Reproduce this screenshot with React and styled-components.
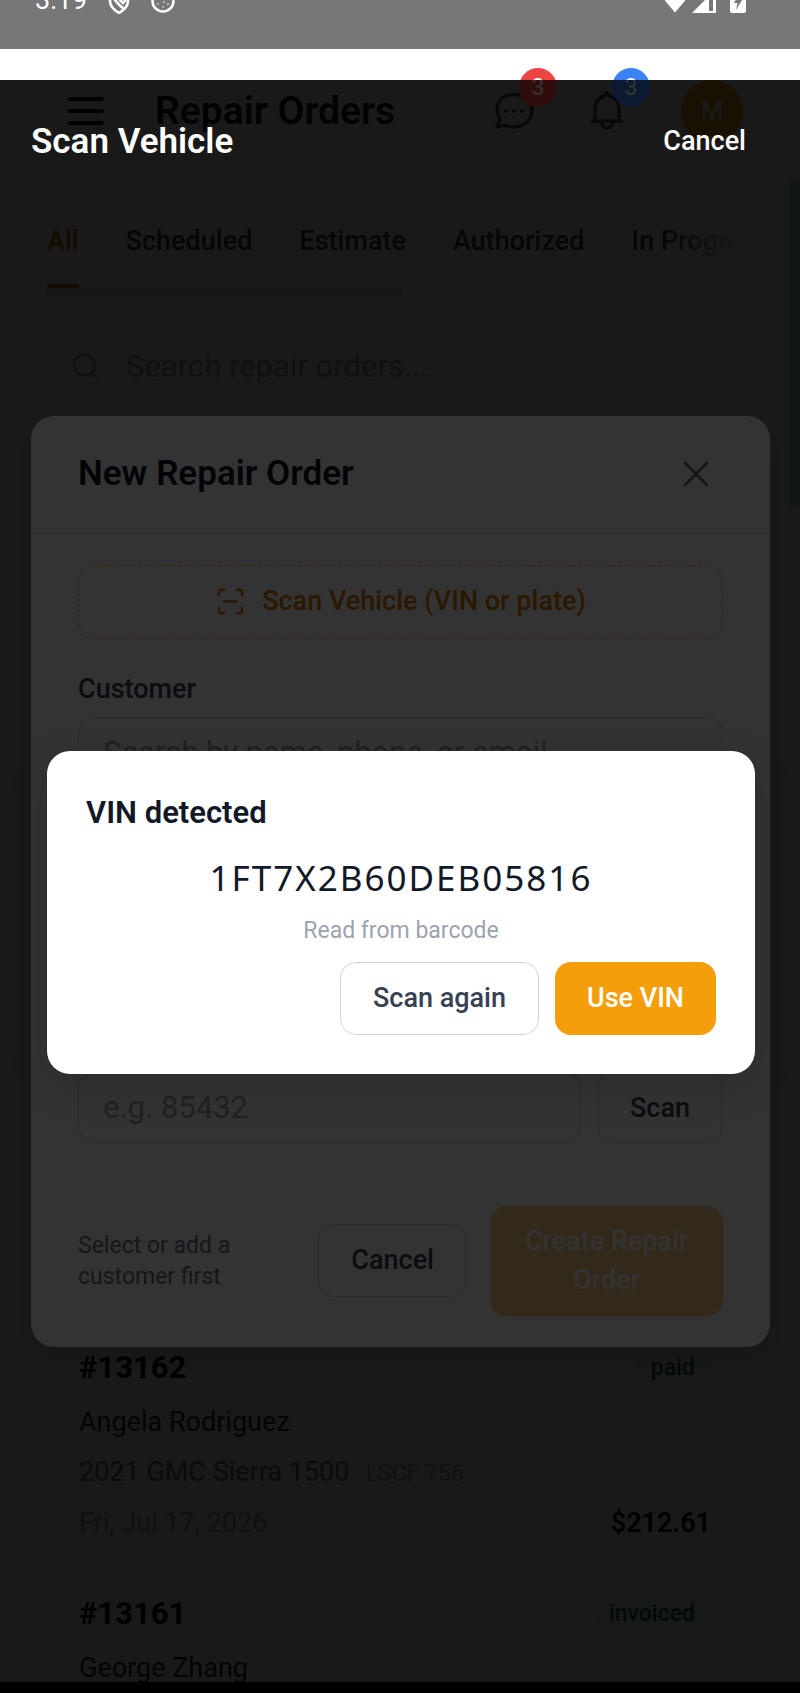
import React, { useState } from "react";
import styled, { createGlobalStyle, css } from "styled-components";
import { ScanLine, Search, X } from "lucide-react";

const tabs = ['All', 'Scheduled', 'Estimate', 'Authorized', 'In Progress'];

const orders = [
    {
        number: '#13162',
        status: 'paid',
        customer: 'Angela Rodriguez',
        vehicle: '2021 GMC Sierra 1500',
        plate: 'LSCF 756',
        date: 'Fri, Jul 17, 2026',
        total: '$212.61',
    },
    { number: '#13161', status: 'invoiced', customer: 'George Zhang' },
];

export default function App() {
    return (
        <Shell>
            <GlobalStyle/>
            <StatusBar/>
            <Screen>
                <RepairOrdersPage/>
                <Backdrop>
                    <NewRepairOrder/>
                </Backdrop>
                <ScanVehicle/>
            </Screen>
            <GestureBar/>
        </Shell>
    )
}

function StatusBar() {
    return (
        <StatusRow>
            <StatusGroup $gap={21}>
                <StatusTime>3:19</StatusTime>
                <svg width="22" height="27" viewBox="0 0 22 27" fill="none" stroke="#fff" strokeWidth="2.600">
                    <path d="M2 6 L11 2 L20 6 V14 C20 19 16 23 11 26 C6 23 2 19 2 14 Z"/>
                    <path d="M4 9 C8 14 10 18 16 22 M10 11 L15 16 L19 11"/>
                </svg>
                <svg width="24" height="27" viewBox="0 0 24 27" fill="none">
                    <circle cx="12" cy="14" r="10.5" stroke="#fff" strokeWidth="2.6"/>
                    <g fill="#fff">
                        <circle cx="7" cy="17" r="0.8"/>
                        <circle cx="12" cy="20" r="0.8"/>
                        <circle cx="17" cy="17" r="0.8"/>
                        <circle cx="13" cy="15" r="0.8"/>
                        <circle cx="8" cy="11" r="0.8"/>
                    </g>
                </svg>
            </StatusGroup>
            <StatusGroup $gap={7}>
                <svg width="20" height="27" viewBox="5 0 20 27" fill="#fff">
                    <path d="M15 25.5 L0 8 C8 1 22 1 30 8 Z"/>
                </svg>
                <svg width="24" height="27" viewBox="0 0 24 27">
                    <path d="M0 26 L24 2 V26 Z" fill="#fff"/>
                    <path d="M17 13 H21 V24 H17 Z" fill="#777"/>
                </svg>
                <svg width="23" height="27" viewBox="0 0 23 27">
                    <path d="M7 4 H12 V1 H18 V4 H23 V24 Q23 26 21 26 H9 Q7 26 7 24 Z" fill="#fff"/>
                    <path d="M16 7 L11 16 H14.500 L13 23 L19 13 H15.500 Z" fill="#777"/>
                </svg>
            </StatusGroup>
        </StatusRow>
    )
}

function RepairOrdersPage() {
    const [activeTab, setActiveTab] = useState('All');
    return (
        <Page>
            <TopBar>
                <MenuButton aria-label="Menu">
                    <svg width="36" height="30" viewBox="0 0 36 30" stroke="currentColor" strokeWidth="4" strokeLinecap="round">
                        <path d="M2 3 H34 M2 15 H34 M2 27 H34"/>
                    </svg>
                </MenuButton>
                <PageTitle>Repair Orders</PageTitle>
                <TopActions>
                    <IconButton aria-label="Messages">
                        <svg width="40" height="38" viewBox="0 0 40 38" fill="none" stroke="currentColor" strokeWidth="3.500">
                            <path d="M6 27 C-1 16 5 2.500 20 2.500 C31 2.500 38 10 38 18.500 C38 28 30 35 20 35 C16 35 13 34 10 33 L3 35 Z" strokeLinejoin="round"/>
                            <g fill="currentColor" stroke="none">
                                <circle cx="12" cy="19" r="2"/>
                                <circle cx="20" cy="19" r="2"/>
                                <circle cx="28" cy="19" r="2"/>
                            </g>
                        </svg>
                        <Badge $color="#ef4444">3</Badge>
                    </IconButton>
                    <IconButton aria-label="Notifications">
                        <svg width="36" height="40" viewBox="0 0 36 40" fill="none" stroke="currentColor" strokeWidth="3.500">
                            <path d="M2 30 H34 M6 30 V18 C6 10 11 6 15 5 L18 2 L21 5 C25 6 30 10 30 18 V30 M12.500 31 C12.500 39 23.500 39 23.500 31"/>
                        </svg>
                        <Badge $color="#3b82f6">3</Badge>
                    </IconButton>
                    <Avatar aria-label="Account">M</Avatar>
                </TopActions>
            </TopBar>
            <TabBar>
                {tabs.map((tab) => (
                    <Tab key={tab} $active={tab === activeTab} onClick={() => setActiveTab(tab)}>{tab}</Tab>
                ))}
            </TabBar>
            <TabThumb/>
            <SearchRow>
                <Search size={31} strokeWidth={2}/>
                <SearchInput type="search" aria-label="Search repair orders" placeholder="Search repair orders..."/>
            </SearchRow>
            <OrderList>
                {orders.map((order) => (
                    <Order key={order.number}>
                        <OrderRow>
                            <OrderNumber>{order.number}</OrderNumber>
                            <Pill>{order.status}</Pill>
                        </OrderRow>
                        <OrderText $color="#1f2937">{order.customer}</OrderText>
                        {order.vehicle && (
                            <OrderText $color="#6b7280">{order.vehicle}<Plate>{order.plate}</Plate></OrderText>
                        )}
                        {order.date && (
                            <OrderRow>
                                <OrderText $color="#9ca3af">{order.date}</OrderText>
                                <Total>{order.total}</Total>
                            </OrderRow>
                        )}
                    </Order>
                ))}
            </OrderList>
            <PageThumb/>
        </Page>
    )
}

function NewRepairOrder() {
    return (
        <Modal role="dialog" aria-labelledby="new-order-title">
            <ModalHeader>
                <ModalTitle id="new-order-title">New Repair Order</ModalTitle>
                <CloseButton aria-label="Close"><X size={44} strokeWidth={1.5}/></CloseButton>
            </ModalHeader>
            <ModalBody>
                <ScanBanner><ScanLine size={31}/>Scan Vehicle (VIN or plate)</ScanBanner>
                <Label htmlFor="customer">Customer</Label>
                <Field id="customer" placeholder="Search by name, phone, or email"/>
                <OdometerRow>
                    <Field aria-label="Odometer" placeholder="e.g. 85432"/>
                    <Button>Scan</Button>
                </OdometerRow>
                <ModalFooter>
                    <Hint>Select or add a customer first</Hint>
                    <Button>Cancel</Button>
                    <Button $primary disabled>Create Repair Order</Button>
                </ModalFooter>
            </ModalBody>
        </Modal>
    )
}

function ScanVehicle() {
    return (
        <ScanOverlay>
            <ScanHeader>
                <ScanTitle>Scan Vehicle</ScanTitle>
                <CancelButton>Cancel</CancelButton>
            </ScanHeader>
            <ScanArea>
                <VinCard role="dialog" aria-labelledby="vin-title">
                    <VinTitle id="vin-title">VIN detected</VinTitle>
                    <Vin>1FT7X2B60DEB05816</Vin>
                    <VinSource>Read from barcode</VinSource>
                    <VinActions>
                        <Button>Scan again</Button>
                        <Button $primary>Use VIN</Button>
                    </VinActions>
                </VinCard>
            </ScanArea>
        </ScanOverlay>
    )
}

const GlobalStyle = createGlobalStyle`
* {
    box-sizing: border-box;
}
body {
    margin: 0;
    font-family: Roboto, "Liberation Sans", sans-serif;
    font-size: 27px;
    line-height: 39px;
    color: #111827;
    background: #fff;
}
button, input {
    font: inherit;
    color: inherit;
    border: none;
    background: none;
    padding: 0;
}
button {
    cursor: pointer;
}
h1, h2, p, ul {
    margin: 0;
    padding: 0;
}
`
const Shell = styled.div`
display: flex;
flex-direction: column;
height: 100vh;
`
const StatusRow = styled.div`
display: flex;
justify-content: space-between;
align-items: flex-start;
flex: none;
height: 49px;
padding: 0 54px 0 35px;
background: #777;
color: #fff;
overflow: hidden;
`
const StatusGroup = styled.div`
display: flex;
align-items: center;
gap: ${props => props.$gap}px;
height: 28px;
margin-top: -14px;
`
const StatusTime = styled.span`
line-height: 32px;
`
const Screen = styled.main`
position: relative;
flex: 1;
min-height: 0;
padding-top: 31px;
overflow: hidden;
`
const GestureBar = styled.div`
flex: none;
height: 11px;
background: #000;
`
const Page = styled.div`
display: flex;
flex-direction: column;
`
const TopBar = styled.header`
display: flex;
align-items: center;
height: 62px;
padding: 0 57px 0 47px;
`
const MenuButton = styled.button`
display: flex;
align-items: center;
justify-content: center;
width: 77px;
height: 62px;
`
const PageTitle = styled.h1`
margin-left: 31px;
font-size: 39px;
font-weight: 600;
white-space: nowrap;
`
const TopActions = styled.div`
display: flex;
align-items: center;
gap: 31px;
margin-left: auto;
`
const IconButton = styled.button`
position: relative;
display: flex;
align-items: center;
justify-content: center;
width: 62px;
height: 62px;
color: #4b5563;
`
const Badge = styled.span`
position: absolute;
z-index: 2;
top: -12px;
right: -12px;
width: 38px;
height: 39px;
border-radius: 50%;
font-size: 23px;
text-align: center;
color: #fff;
background: ${props => props.$color};
`
const Avatar = styled.button`
width: 62px;
height: 62px;
margin-left: 12px;
border-radius: 50%;
font-weight: 600;
color: #fff;
background: #f59e0b;
`
const TabBar = styled.nav`
display: flex;
gap: 47px;
margin: 62px 57px 0 47px;
overflow: hidden;
mask-image: linear-gradient(to right, #000 calc(100% - 78px), transparent);
`
const Tab = styled.button`
flex: none;
padding: 18px 0 23px;
border-bottom: 4px solid ${props => props.$active ? '#d97706' : 'transparent'};
font-weight: 500;
color: ${props => props.$active ? '#d97706' : '#374151'};
`
const TabThumb = styled.div`
width: 50%;
max-width: 354px;
height: 8px;
margin-left: 47px;
background: #d5e0e8;
`
const SearchRow = styled.div`
display: flex;
align-items: center;
gap: 25px;
height: 70px;
margin: 35px 47px 0;
padding: 0 23px;
color: #9ca3af;
`
const SearchInput = styled.input`
flex: 1;
min-width: 0;
font-size: 31px;
&::placeholder {
    color: #9ca3af;
    opacity: 1;
}
`
const OrderList = styled.ul`
display: flex;
flex-direction: column;
gap: 46px;
margin-top: 942px;
padding: 0 89px 0 79px;
list-style: none;
`
const Order = styled.li`
display: flex;
flex-direction: column;
gap: 11px;
`
const OrderRow = styled.div`
display: flex;
align-items: center;
justify-content: space-between;
`
const OrderNumber = styled.span`
font-size: 31px;
font-weight: 700;
line-height: 49px;
color: #000;
`
const Pill = styled.span`
padding: 0 16px;
border-radius: 20px;
font-size: 23px;
font-weight: 500;
color: #166534;
background: #ecfdf3;
`
const OrderText = styled.p`
color: ${props => props.$color};
`
const Plate = styled.span`
margin-left: 16px;
font-size: 23px;
color: #9ca3af;
`
const Total = styled.span`
font-weight: 600;
color: #000;
`
const PageThumb = styled.div`
position: absolute;
top: 129px;
right: 0;
width: 11px;
height: 328px;
background: #c5e0e5;
`
const Backdrop = styled.div`
position: absolute;
z-index: 1;
inset: 31px 0 0;
display: flex;
align-items: center;
padding: 0 30px 0 31px;
background: rgba(0, 0, 0, 0.5);
`
const Modal = styled.section`
flex: 1;
border-radius: 23px;
background: #fff;
box-shadow: 0 12px 24px rgba(0, 0, 0, 0.15);
`
const ModalHeader = styled.header`
display: flex;
align-items: center;
justify-content: space-between;
height: 118px;
padding: 0 47px;
border-bottom: 2px solid #e5e7eb;
`
const ModalTitle = styled.h2`
font-size: 35px;
font-weight: 600;
`
const CloseButton = styled.button`
display: flex;
align-items: center;
justify-content: center;
width: 54px;
height: 54px;
color: #6b7280;
`
const ModalBody = styled.div`
display: flex;
flex-direction: column;
padding: 31px 47px;
`
const ScanBanner = styled.button`
display: flex;
align-items: center;
justify-content: center;
gap: 16px;
height: 74px;
border: 1px dashed #fbbf24;
border-radius: 16px;
font-weight: 500;
color: #d97706;
`
const Label = styled.label`
margin-top: 31px;
font-weight: 500;
color: #374151;
`
const Field = styled.input`
flex: 1;
min-width: 0;
height: 71px;
min-height: 71px;
margin-top: 8px;
padding: 0 24px;
border: 1px solid #d1d5db;
border-radius: 16px;
font-size: 31px;
&::placeholder {
    color: #9ca3af;
    opacity: 1;
}
`
const OdometerRow = styled.div`
display: flex;
gap: 16px;
margin-top: 284px;
& > * {
    height: 71px;
    margin-top: 0;
}
`
const Button = styled.button`
flex: none;
padding: 16px 32px;
border: 1px solid #d1d5db;
border-radius: 16px;
font-weight: 500;
color: #374151;
background: #fff;
${props => props.$primary && css`
    border: none;
    color: #fff;
    background: #f59e0b;
`}
&:disabled {
    opacity: 0.5;
    cursor: default;
}
`
const ModalFooter = styled.footer`
display: flex;
align-items: center;
gap: 23px;
margin-top: 31px;
padding-top: 31px;
border-top: 1px solid #f3f4f6;
& > button:last-child {
    flex: 0 1 233px;
}
`
const Hint = styled.p`
flex: 1;
font-size: 23px;
line-height: 31px;
color: #6b7280;
`
const ScanOverlay = styled.section`
position: absolute;
z-index: 3;
inset: 31px 0 0;
display: flex;
flex-direction: column;
background: rgba(0, 0, 0, 0.8);
`
const ScanHeader = styled.header`
display: flex;
align-items: center;
justify-content: space-between;
height: 122px;
padding: 0 31px;
color: #fff;
`
const ScanTitle = styled.h2`
font-size: 35px;
font-weight: 600;
`
const CancelButton = styled.button`
padding: 16px 23px;
font-weight: 500;
color: #fff;
`
const ScanArea = styled.div`
display: flex;
flex: 1;
align-items: center;
padding: 0 45px 60px 47px;
`
const VinCard = styled.div`
flex: 1;
padding: 39px;
border-radius: 23px;
background: #fff;
box-shadow: 0 12px 40px rgba(0, 0, 0, 0.15);
`
const VinTitle = styled.h2`
margin-bottom: 16px;
font-size: 31px;
font-weight: 600;
line-height: 45px;
`
const Vin = styled.p`
margin-bottom: 10px;
font-family: "Noto Sans", "DejaVu Sans", sans-serif;
font-size: 35px;
line-height: 54px;
letter-spacing: 2px;
text-align: center;
`
const VinSource = styled.p`
font-size: 23px;
line-height: 31px;
text-align: center;
color: #9ca3af;
`
const VinActions = styled.div`
display: flex;
justify-content: flex-end;
gap: 16px;
margin-top: 16px;
`
